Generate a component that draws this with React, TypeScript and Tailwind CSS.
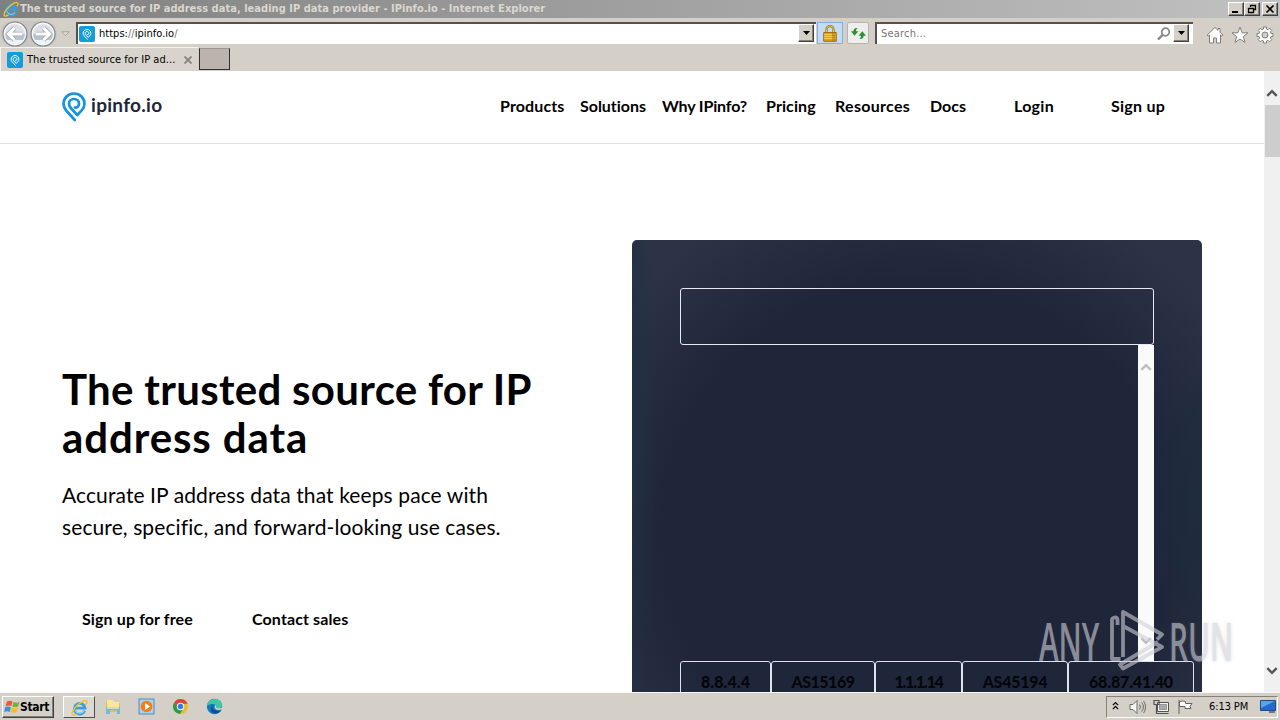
import type { ReactNode } from 'react';

const NAV_LINKS = [
  { label: 'Products', className: 'w-[80px] tracking-[0.12px]' },
  { label: 'Solutions', className: 'w-[82px] tracking-[-0.03px]' },
  { label: 'Why IPinfo?', className: 'w-[104px] tracking-[-0.15px]' },
  { label: 'Pricing', className: 'w-[69px] tracking-[0.1px]' },
  { label: 'Resources', className: 'w-[95px] tracking-[0.3px]' },
  { label: 'Docs', className: 'w-[84px]' },
  { label: 'Login', className: 'w-[97px] tracking-[0.3px]' },
  { label: 'Sign up', className: 'w-[153px] tracking-[0.25px]' },
];

const SAMPLES = [
  { label: '8.8.4.4', className: 'w-[91px] tracking-[0.1px]' },
  { label: 'AS15169', className: 'w-[104px] tracking-[-0.5px]' },
  { label: '1.1.1.14', className: 'w-[87px] tracking-[-1.2px]' },
  { label: 'AS45194', className: 'w-[106px] tracking-[-0.25px]' },
  { label: '68.87.41.40', className: 'w-[126px] tracking-[-0.15px]' },
];

const RAISED = 'border border-t-white border-l-white border-r-[#404040] border-b-[#404040] bg-[#d4cfc7] shadow-[inset_-1px_-1px_0_#858078]';

function PinMark({ className }: { className?: string }) {
  return (
    <svg viewBox="0 0 24 30" className={className} fill="none" stroke="currentColor" strokeLinecap="round" strokeLinejoin="round">
      <path d="M12.800 28 5 19.500C2.500 16.700 1.500 14.500 1.500 11.500 1.500 5.900 6.200 1.500 12 1.500s10.500 4.400 10.500 10.100c0 2.700-1 4.800-2.800 6.800L15.300 23 9.200 16.500C7.700 14.900 7 13.600 7 11.800 7 9 9.200 7 12 7s5 2 5 4.700c0 2.600-2 4.300-4.200 3.800" strokeWidth="2.700" />
    </svg>
  );
}

function IeLogo({ className }: { className?: string }) {
  return (
    <svg viewBox="0 0 16 16" className={className} fill="none">
      <path d="M12.900 11A5 5 0 1 1 13.200 8.500H4.500" stroke="#3b9de0" strokeWidth="2.600" />
      <path d="M12.200 11.200A4.600 4.600 0 0 1 4 10.400" stroke="#93d7f8" strokeWidth="1" />
      <path d="M14 5.300C16 2 14.700.2 11 2.200 6 4.800-.4 12 1.300 14.500c.7 1 2.500.5 4.200-.6" stroke="#f4c325" strokeWidth="1.400" />
    </svg>
  );
}

function Favicon() {
  return (
    <span className="flex size-4 shrink-0 items-center justify-center rounded-[2px] bg-[#159ddb] text-white">
      <PinMark className="h-[11px] w-[10px]" />
    </span>
  );
}

function DropButton() {
  return (
    <span className={`flex h-[18px] w-4 shrink-0 items-center justify-center ${RAISED}`}>
      <svg viewBox="0 0 7 4" className="h-1 w-[7px]"><path d="M0 0h7L3.500 4Z" fill="black" /></svg>
    </span>
  );
}

function Arrow({ flip }: { flip?: boolean }) {
  return (
    <svg viewBox="0 0 26 26" className="size-[26px]">
      <circle cx="13" cy="13" r="12" fill="#b9c3cd" stroke="#85878a" strokeWidth="1.200" />
      <path d="M2 13a11 11 0 0 1 22 0Z" fill="#dde1e5" />
      <path d="M5 19a10 10 0 0 0 16 0Z" fill="#edf3f6" />
      <circle cx="13" cy="13" r="10.600" fill="none" stroke="#f7f9fa" strokeWidth="1.200" />
      <g transform={flip ? 'rotate(180 13 13)' : undefined} fill="none">
        <path d="m12.500 7-6 6 6 6M7 13h13" stroke="#a1abb6" strokeWidth="4.600" />
        <path d="m12.500 7-6 6 6 6M7 13h13" stroke="white" strokeWidth="3.100" />
      </g>
    </svg>
  );
}

function Chevron({ down, className }: { down?: boolean; className?: string }) {
  return (
    <svg viewBox="0 0 12 8" className={`h-2 w-3 ${down ? 'rotate-180' : ''} ${className ?? ''}`}>
      <path d="m1.300 6.800 4.700-4.700 4.700 4.700" fill="none" stroke="currentColor" strokeWidth="2.400" />
    </svg>
  );
}

function WindowButton({ children }: { children: ReactNode }) {
  return (
    <button className={`flex h-[14px] w-4 items-center justify-center ${RAISED}`}>
      <svg viewBox="0 0 12 10" className="h-[10px] w-3 shrink-0" fill="none" stroke="black">{children}</svg>
    </button>
  );
}

function TitleBar() {
  return (
    <div className="flex h-[18px] items-center bg-linear-to-r from-[#808080] to-[#c1c1c1] pr-[2px] pl-[3px]">
      <IeLogo className="size-4" />
      <span className="ml-[1px] pt-[1px] text-[11px] font-bold tracking-[0.03px] whitespace-nowrap text-[#dad7d1]">
        The trusted source for IP address data, leading IP data provider - IPinfo.io - Internet Explorer
      </span>
      <div className="ml-auto flex">
        <WindowButton><path d="M2 8h6" strokeWidth="2" /></WindowButton>
        <WindowButton>
          <path d="M4.500 3V1.500h5v4H8M4 1.500h6M2.500 4.500h5v4h-5ZM2 4.500h6" strokeWidth="1.300" />
        </WindowButton>
        <span className="w-[2px]" />
        <WindowButton><path d="m2.500 1.500 7 7m0-7-7 7" strokeWidth="1.700" /></WindowButton>
      </div>
    </div>
  );
}

function AddressBar() {
  return (
    <div className="flex h-[29px] items-start pt-[3px]">
      <div className="flex h-[26px] w-[57px] items-center rounded-full bg-[#c9c7c4] pl-[2px]">
        <Arrow />
        <span className="ml-[2px]"><Arrow flip /></span>
      </div>
      <svg viewBox="0 0 9 6" className="mt-[10px] ml-[4px] h-[6px] w-[9px]"><path d="M.7.7h7.600l-3.800 4Z" fill="#ddd9d3" stroke="#aaa69f" /></svg>
      <div className="mt-[1px] ml-[6px] flex h-[22px] w-[740px] items-center border-t-2 border-l-2 border-[#55524e] bg-white pl-[1px]">
        <Favicon />
        <span className="ml-1 text-[11px] tracking-[0.02px]">https:<span className="text-[#777]">//</span>ipinfo.io<span className="text-[#777]">/</span></span>
        <span className="ml-auto pr-[2px] pb-[2px]"><DropButton /></span>
      </div>
      <span className="mt-[1px] ml-[1px] flex h-[22px] w-[26px] items-center justify-center border border-[#7eb0e4] bg-[#c5dcf5]">
        <svg viewBox="0 0 14 17" className="h-[17px] w-[14px]">
          <path d="M3.500 9V4.500a3.500 3.500 0 0 1 7 0V9" fill="none" stroke="#9a731b" strokeWidth="2.300" />
          <path d="M3.500 9V4.500a3.500 3.500 0 0 1 7 0V9" fill="none" stroke="#e8c361" strokeWidth="1" />
          <path d="M.7 7.500h12.600v8.800H.7Z" fill="#dda516" stroke="#99701a" />
          <path d="M1 9.500h12M1 11.500h12M1 13.500h12" stroke="#f4ca49" />
          <path d="M9 8v8h3.500V8Z" fill="#b77a0d" opacity=".6" />
        </svg>
      </span>
      <span className="mt-[1px] ml-1 flex h-[22px] w-[22px] items-center justify-center rounded-[2px] border border-[#b7b4af] bg-[#edeeed]">
        <svg viewBox="0 0 14 14" className="size-[15px]" fill="#2d9132">
          <path d="m0 5 3.200 4L7 5H4.700c0-1.500.3-2.500 1.500-3C3.500 1.700 2.200 3 2.200 5ZM14 9l-3.400-4L7 9h2.300c0 1.500-.4 2.500-1.600 3.200 2.600.1 4.100-1.200 4.100-3.200Z" />
        </svg>
      </span>
      <div className="mt-[1px] ml-[6px] flex h-[22px] w-[318px] items-center border-t-2 border-l-2 border-[#55524e] bg-white pr-1 pl-[4px]">
        <span className="text-[11px] tracking-[0.2px] text-[#777]">Search...</span>
        <svg viewBox="0 0 14 14" className="mr-[2px] ml-auto size-[14px]" fill="none" stroke="#858585">
          <circle cx="8.500" cy="5" r="3.800" strokeWidth="1.700" /><path d="M5.700 7.800 1 12.500" strokeWidth="2.400" />
        </svg>
        <span className="pb-[2px]"><DropButton /></span>
      </div>
      <div className="mt-[5px] ml-[13px] flex gap-[7px]">
        <svg viewBox="0 0 18 18" className="size-[18px]" fill="white" stroke="#807e7a" strokeWidth="1">
          <path d="M9 1.500 1.200 9l1 1.200L3.500 9v8H7.500v-5h3v5h4V9l1.300 1.200 1-1.200L14 6.200V2.500h-2v1.800Z" />
        </svg>
        <svg viewBox="0 0 18 18" className="size-[18px]" fill="white" stroke="#807e7a" strokeWidth="1">
          <path d="m9 1.200 2.100 5.500 5.900.2-4.600 3.700 1.600 5.800L9 13.100l-5 3.300 1.600-5.800L1 6.900l5.900-.2Z" />
        </svg>
        <svg viewBox="0 0 18 18" className="size-[18px]" fill="white" stroke="#807e7a" strokeWidth="1">
          <path d="M7.500 1h3v2l1.600.7 1.500-1.500 2.200 2.200-1.500 1.500.7 1.600h2v3h-2l-.7 1.600 1.500 1.500-2.200 2.200-1.500-1.500-1.600.7v2h-3v-2l-1.600-.7-1.500 1.500-2.200-2.200 1.500-1.500L3 10.500H1v-3h2l.7-1.600-1.500-1.500 2.200-2.200 1.500 1.500L7.500 3Z" />
          <circle cx="9" cy="9" r="3" fill="#d4cfc7" />
        </svg>
      </div>
    </div>
  );
}

function TabRow() {
  return (
    <div className="flex h-6">
      <div className="flex w-[198px] items-center border-t border-l border-[#f5f3f0] bg-[#d8d3cc] pt-[1px] pl-[6px]">
        <Favicon />
        <span className="ml-1 pt-[1px] text-[11px] tracking-[0.05px]">The trusted source for IP ad...</span>
        <svg viewBox="0 0 8 8" className="mr-[6px] ml-auto size-2" stroke="#85817c" strokeWidth="1.800"><path d="m.5.5 7 7m0-7-7 7" /></svg>
      </div>
      <div className="mt-[1px] ml-[1px] h-[22px] w-[31px] border border-[#33312f] border-t-[#9a9590] bg-[#bbb3ae]" />
    </div>
  );
}

function SiteHeader() {
  return (
    <header className="flex h-[73px] items-center border-b border-[#dfe2e4] pl-[62px]">
      <PinMark className="h-[30px] w-6 text-[#1493df]" />
      <span className="mb-[3px] ml-[5px] font-[Lato] text-[19px] font-bold tracking-[0.3px] text-[#202638]">ipinfo.io</span>
      <nav className="mb-[2px] ml-auto flex font-[Lato] text-[16px] font-bold">
        {NAV_LINKS.map(l => <a key={l.label} className={`whitespace-nowrap ${l.className}`}>{l.label}</a>)}
      </nav>
    </header>
  );
}

function Hero() {
  return (
    <section className="flex h-[548px] pt-24 pl-[62px]">
      <div className="w-[570px] pt-[125px]">
        <h1 className="font-[Lato] text-[42px] leading-[48px] font-bold">
          <span className="tracking-[0.3px]">The trusted source for IP</span><br />
          <span className="tracking-[0.9px]">address data</span>
        </h1>
        <p className="mt-[18px] font-[Lato] text-[21px] leading-8 tracking-[0.1px]">Accurate IP address data that keeps pace with<br />secure, specific, and forward-looking use cases.</p>
        <div className="mt-[64px] flex pl-5 font-[Lato] text-[16px] font-bold tracking-[0.12px]">
          <a className="w-[170px]">Sign up for free</a>
          <a>Contact sales</a>
        </div>
      </div>
      <div className="w-[570px] rounded-t-[5px] bg-[radial-gradient(60px_150px_at_100%_58%,#1d2c3d,transparent),radial-gradient(24px_320px_at_0%_40%,#203142,transparent),radial-gradient(circle_at_50%_65%,#20263a_62%,#2c3347_90%)] pt-12 pl-12">
        <div className="h-[57px] w-[474px] rounded-[3px] border border-[#e6e8f5]" />
        <div className="flex h-[316px] w-[474px] justify-end">
          <div className="flex w-4 flex-col items-center justify-between bg-[#fafafa] pt-[18px] pb-[16px] text-[#bfbfbf]">
            <Chevron />
            <Chevron down />
          </div>
        </div>
        <div className="flex">
          {SAMPLES.map(s => (
            <span key={s.label} className={`flex h-[50px] shrink-0 justify-center rounded-t-[3px] border border-[#dfe2f0] pt-[8px] font-[Lato] text-[16px] font-black text-[#04060b] ${s.className}`}>{s.label}</span>
          ))}
        </div>
      </div>
    </section>
  );
}

function Watermark() {
  return (
    <div className="absolute top-[537px] left-[1039px] flex h-[64px] w-[196px] items-center text-[#cfd1d7] opacity-60">
      <span className="w-[69px] origin-left scale-x-[0.56] font-['Open_Sans'] text-[53px] leading-none font-semibold">ANY</span>
      <svg viewBox="0 0 56 64" className="h-16 w-14 shrink-0" fill="none" stroke="currentColor" strokeWidth="3.800" strokeLinejoin="round">
        <path d="M9.500 17v-5q0-3-3-2.500T4 13v38h8.500" />
        <path d="M15 49V4L54 26.500l-5 5M15 18l39 21-39 21.500-3-4L50 34" />
      </svg>
      <span className="ml-[5px] origin-left scale-x-[0.56] font-['Open_Sans'] text-[53px] leading-none font-semibold [text-shadow:0_0_5px_#7776]">RUN</span>
    </div>
  );
}

function Taskbar() {
  return (
    <footer className="flex h-[28px] items-center border-t border-[#f8f7f5] bg-[#d4cfc7] pt-[1px] pl-[2px]">
      <button className={`flex h-[22px] w-[52px] items-center pl-[1px] text-[12px] font-bold tracking-[-0.3px] ${RAISED}`}>
        <svg viewBox="0 0 16 16" className="size-4 shrink-0">
          <path d="M3 2.500q3-1.700 5.500 0L7.300 7Q4.500 5.800 1.500 7.200Z" fill="#e65b2f" />
          <path d="M9.500 3q3 1.500 6 0L14 7.500q-3 1.200-5.600 0Z" fill="#76ad3b" />
          <path d="M1.200 8.300q3-1.500 5.700 0L5.700 13q-2.500-1.300-5.500 0Z" fill="#3d8edb" />
          <path d="M8 8.500q2.800 1.300 5.800 0L12.500 13q-3 1.500-5.700 0Z" fill="#f5bd25" />
        </svg>
        Start
      </button>
      <span className="ml-[9px] flex h-[22px] w-8 items-center justify-center border border-white border-r-[#504d4a] border-b-[#504d4a] bg-[#dcd8d2]"><IeLogo className="size-[17px]" /></span>
      <svg viewBox="0 0 18 18" className="ml-[9px] size-[18px]">
        <path d="M2 3h5l1 2h8v9H2Z" fill="#e3bd59" /><path d="M3 2h6l1 2h5v6H3Z" fill="#fae79c" />
        <path d="M2 9h14v7h-3v-4H6v4H2Z" fill="#78b9d9" /><path d="M3 9h12v2H3Z" fill="#b5e0ed" />
      </svg>
      <svg viewBox="0 0 18 18" className="ml-[16px] size-[18px]">
        <rect x="1" y="1" width="15" height="15" fill="#a9d0ed" stroke="#528bc0" /><circle cx="8.500" cy="8.500" r="5.800" fill="#f47e12" /><path d="m7 5 5 3.500-5 3.500Z" fill="white" />
      </svg>
      <svg viewBox="0 0 18 18" className="ml-[16px] size-[18px]">
        <circle cx="8.500" cy="8.500" r="7.500" fill="#e7bd2b" />
        <path d="M2 4.700a7.500 7.500 0 0 1 13.500 1H8.500L5.500 10Z" fill="#db4538" />
        <path d="M2 4.700A7.500 7.500 0 0 0 8 16l3.500-5.800-5 .6Z" fill="#289c4e" />
        <circle cx="8.500" cy="8.500" r="3.700" fill="white" /><circle cx="8.500" cy="8.500" r="2.800" fill="#347ee0" />
      </svg>
      <svg viewBox="0 0 18 18" className="ml-[16px] size-[18px]">
        <circle cx="8.500" cy="8.500" r="7.700" fill="#117bbf" />
        <path d="M1 8C1.700-.7 15.800-1.700 16.200 7.500c-.2 3.500-4.500 3.600-6 2.500 2-3.200-3.500-6.200-9.200-2Z" fill="#42c5a2" />
        <path d="M7 7c-2.500 3 1.500 7.500 8.500 5.300C12 17.500 4 15.500 5 10c.2-1.400 1-2.500 2-3Z" fill="#124c94" />
        <path d="M9.200 7c-1.200 1.800-.6 4.800 3 5 1.400.1 2.800-.4 3.800-1.100V9.500c-1.700 1.200-4.500 1-5.800.3.800-1 .2-2.300-1-2.800Z" fill="#d4cfc7" />
      </svg>
      <div className="mr-[2px] ml-auto flex h-[22px] w-[172px] items-center border border-[#858078] border-r-white border-b-white pl-[5px]">
        <svg viewBox="0 0 8 10" className="mb-[3px] h-[10px] w-[7px]" fill="none" stroke="black" strokeWidth="1.400"><path d="m1 4 3-3 3 3M1 8.500l3-3 3 3" /></svg>
        <svg viewBox="0 0 17 16" className="ml-[10px] h-4 w-[17px]" fill="#f8f8f7" stroke="#6d6b69" strokeWidth="1">
          <path d="M1 5.500h3l4-4v13l-4-4H1Z" /><path d="M10.500 5.500q2 2.500 0 5M12.700 3.500q3.500 4.500 0 9M14.600 2q4 6 0 12" fill="none" />
        </svg>
        <svg viewBox="0 0 17 16" className="ml-[7px] h-4 w-[17px]" fill="#f5f4f2" stroke="#55534f">
          <path d="M4.500 3.500h11v9h-11Z" /><path d="M6.500 5.500h7v5h-7Z" fill="#aaa" stroke="#999" /><path d="M1 1.500h5v4H1ZM3.500 6v8.500h12" strokeWidth="1.200" fill="none" />
        </svg>
        <svg viewBox="0 0 17 16" className="ml-[7px] h-4 w-[17px]" fill="white" stroke="#65625e">
          <path d="M2 1v14M2.500 2.500q3-1 6 0v2h6.500l-2 3 1 2H8v-2H2.500Z" />
        </svg>
        <span className="ml-[15px] text-[11px] tracking-[-0.1px] whitespace-nowrap">6:13 PM</span>
        <svg viewBox="0 0 16 14" className="mr-[1px] ml-auto h-[14px] w-4">
          <path d="M.5.5h15v10H.5Z" fill="#2469ce" stroke="#254a80" /><path d="M1 1h14L1 8Z" fill="#5aa4ed" /><path d="M9 12h6" stroke="#575e67" strokeWidth="1.500" />
        </svg>
      </div>
    </footer>
  );
}

export default function App() {
  return (
    <div className="flex h-[720px] w-[1280px] flex-col overflow-hidden bg-[#d4cfc7] font-['DejaVu_Sans_Condensed','DejaVu_Sans',sans-serif] text-black">
      <TitleBar />
      <AddressBar />
      <TabRow />
      <div className="relative flex h-[621px] overflow-hidden bg-white">
        <main className="w-[1264px] overflow-hidden">
          <SiteHeader />
          <Hero />
        </main>
        <aside className="flex w-4 flex-col items-center bg-[#f0f0f0] pt-[18px] pb-[17px] text-[#555]">
          <Chevron />
          <div className="mt-2 h-[52px] w-[15px] bg-[#cdcdcd]" />
          <Chevron down className="mt-auto" />
        </aside>
        <Watermark />
      </div>
      <Taskbar />
    </div>
  );
}
